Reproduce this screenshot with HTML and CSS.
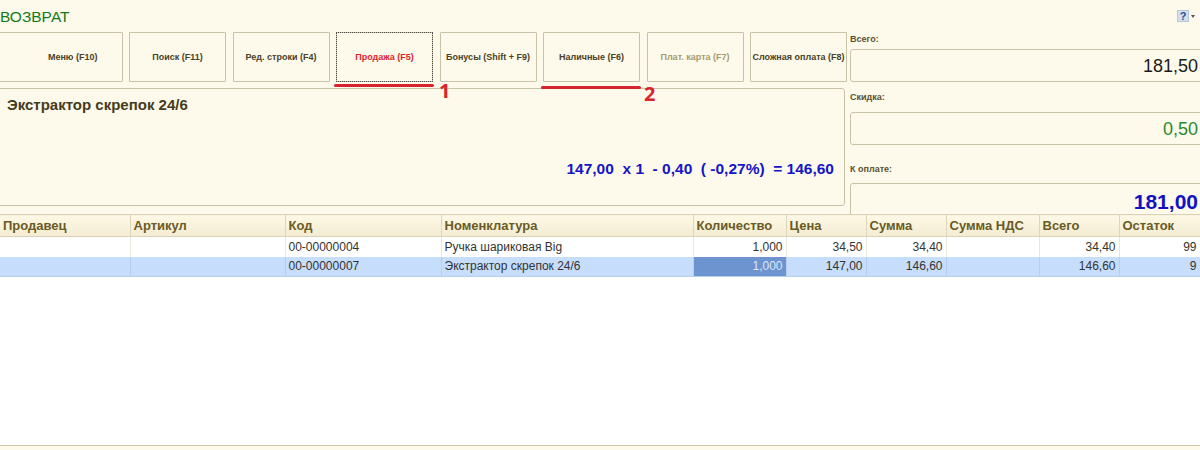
FILE: index.html
```html
<!DOCTYPE html>
<html lang="ru">
<head>
<meta charset="utf-8">
<title>ВОЗВРАТ</title>
<link rel="stylesheet" href="styles.css">
</head>
<body>
<div class="page">
  <header class="titlebar">
    <h1 class="title">ВОЗВРАТ</h1>
    <div class="help">
      <span class="help-box">?</span>
      <svg class="help-caret" width="4" height="3" viewBox="0 0 4 3"><path d="M0 0h4L2 3z" fill="#555"/></svg>
    </div>
  </header>
  <div class="top">
    <div class="main">
      <nav class="buttons">
        <button class="btn">Меню (F10)</button>
        <button class="btn">Поиск (F11)</button>
        <button class="btn">Ред. строки (F4)</button>
        <button class="btn btn-active">Продажа (F5)</button>
        <button class="btn">Бонусы (Shift + F9)</button>
        <button class="btn">Наличные (F6)</button>
        <button class="btn btn-disabled">Плат. карта (F7)</button>
        <button class="btn">Сложная оплата (F8)</button>
      </nav>
      <section class="info">
        <div class="info-name">Экстрактор скрепок 24/6</div>
        <div class="info-calc">147,00&nbsp; x 1&nbsp; - 0,40&nbsp; ( -0,27%)&nbsp; = 146,60</div>
      </section>
    </div>
    <aside class="totals">
      <div class="total total-sum">
        <div class="total-label">Всего:</div>
        <div class="total-field val-black">181,50</div>
      </div>
      <div class="total total-disc">
        <div class="total-label">Скидка:</div>
        <div class="total-field val-green">0,50</div>
      </div>
      <div class="total total-pay">
        <div class="total-label">К оплате:</div>
        <div class="total-field val-blue">181,00</div>
      </div>
    </aside>
  </div>
  <table class="grid">
    <thead>
      <tr>
        <th class="c1">Продавец</th><th class="c2">Артикул</th><th class="c3">Код</th><th class="c4">Номенклатура</th><th class="c5">Количество</th><th class="c6">Цена</th><th class="c7">Сумма</th><th class="c8">Сумма НДС</th><th class="c9">Всего</th><th class="c10">Остаток</th>
      </tr>
    </thead>
    <tbody>
      <tr>
        <td></td><td></td><td>00-00000004</td><td>Ручка шариковая Big</td><td class="num">1,000</td><td class="num">34,50</td><td class="num">34,40</td><td></td><td class="num">34,40</td><td class="num">99</td>
      </tr>
      <tr class="row-selected">
        <td></td><td></td><td>00-00000007</td><td>Экстрактор скрепок 24/6</td><td class="num cell-current">1,000</td><td class="num">147,00</td><td class="num">146,60</td><td></td><td class="num">146,60</td><td class="num">9</td>
      </tr>
    </tbody>
  </table>
  <div class="grid-space"></div>
  <footer class="statusbar"></footer>

  <div class="mark mark-1"></div>
  <div class="mark-num mark-num-1">1</div>
  <div class="mark mark-2"></div>
  <div class="mark-num mark-num-2">2</div>
</div>
</body>
</html>
```
FILE: styles.css
```css
* { box-sizing: border-box; }
html, body { margin: 0; padding: 0; }
body { background: #fdfaeb; font-family: "Liberation Sans", Arial, sans-serif; }

.page {
  position: relative;
  width: 1200px;
  height: 450px;
  overflow: hidden;
  display: flex;
  flex-direction: column;
  background: #fdfaeb;
}

.titlebar {
  height: 32px;
  flex: none;
  display: flex;
  justify-content: space-between;
  align-items: flex-start;
  padding: 8px 5px 0 0;
}
.title {
  margin: 0;
  font-size: 15.5px;
  line-height: 17px;
  font-weight: 400;
  color: #157a1a;
}
.help { display: flex; align-items: center; gap: 2px; margin-top: 2px; }
.help-box {
  width: 12px;
  height: 12px;
  background: #d5deea;
  border: 1px solid #b9c6d8;
  color: #2a4f9c;
  font-size: 11px;
  line-height: 11px;
  font-weight: 700;
  text-align: center;
}
.help-caret { display: block; }

.top { display: flex; height: 182px; flex: none; }
.main { width: 852px; flex: none; margin-left: -2px; }

.buttons { display: flex; gap: 6.5px; height: 50px; }
.btn {
  flex: none;
  width: 97px;
  height: 50px;
  padding: 0;
  background: #fdfaeb;
  border: 1px solid #c9c2a6;
  border-radius: 1px;
  font-family: "Liberation Sans", Arial, sans-serif;
  font-size: 9px;
  font-weight: 700;
  color: #4a4128;
  white-space: nowrap;
  text-align: center;
}
.btn:first-child { width: 124.5px; padding-left: 25px; }
.btn-active { color: #e0242e; outline: 1px dotted #4a4a40; outline-offset: -1px; }
.btn-disabled { color: #a89a70; }

.info {
  margin-top: 6px;
  width: 847px;
  height: 118px;
  background: #fdfaeb;
  border: 1px solid #c9c2a6;
  border-radius: 3px;
  padding: 7px 10px 0 8px;
  display: flex;
  flex-direction: column;
  justify-content: space-between;
  padding-bottom: 27px;
}
.info-name { font-size: 15px; line-height: 17px; font-weight: 700; color: #463c1c; }
.info-calc { font-size: 15.5px; line-height: 18px; font-weight: 700; color: #1414c8; text-align: right; }

.totals { flex: 1; min-width: 0; display: flex; flex-direction: column; margin-right: -4px; }
.total-label { font-size: 9px; font-weight: 700; color: #5a5032; line-height: 11px; }
.total-field {
  border: 1px solid #c9c2a6;
  border-radius: 3px;
  background: #fdfaeb;
  text-align: right;
  padding-right: 5px;
  font-size: 18px;
}
.total-sum .total-label { padding-top: 2px; margin-bottom: 4px; }
.total-sum .total-field { height: 33px; line-height: 33px; }
.total-disc { margin-top: 10px; }
.total-disc .total-label { margin-bottom: 9px; }
.total-disc .total-field { height: 33px; line-height: 32px; }
.total-pay { margin-top: 19px; }
.total-pay .total-label { margin-bottom: 8px; }
.total-pay .total-field { height: 35px; line-height: 35px; font-size: 21px; font-weight: 700; }
.val-black { color: #1a1a1a; }
.val-green { color: #2a8a2e; }
.val-blue { color: #1212c4; }

.grid {
  border-collapse: collapse;
  table-layout: fixed;
  width: 1200px;
  flex: none;
  background: #fff;
}
.grid th {
  height: 22px;
  padding: 0 3px;
  text-align: left;
  font-size: 13px;
  font-weight: 700;
  color: #6a5a24;
  background: linear-gradient(#fdf8e6, #f4ecd2);
  border-top: 1px solid #d9d2b8;
  border-bottom: 1px solid #d9d2b8;
  border-right: 1px solid #ddd6bf;
  white-space: nowrap;
  overflow: hidden;
}
.grid td {
  height: 20px;
  padding: 0 3px;
  font-size: 12px;
  color: #333;
  border-right: 1px solid #e9e7de;
  white-space: nowrap;
  overflow: hidden;
}
.c1 { width: 130px; }
.c2 { width: 155px; }
.c3 { width: 156px; }
.c4 { width: 252px; }
.c5 { width: 93px; }
.c6 { width: 80px; }
.c7 { width: 80px; }
.c8 { width: 93px; }
.c9 { width: 80px; }
.c10 { width: 81px; }
.grid .num { text-align: right; }
.grid .row-selected td { background: #c6ddfb; border-right-color: #b7cfee; border-bottom: 1px solid #b7cfee; }
.grid .row-selected .cell-current { background: #6d94cf; color: #dbe7f6; }

.grid-space { flex: 1; background: #fff; }
.statusbar { height: 5px; flex: none; border-top: 1px solid #cfc8ae; background: #fdfaeb; }

.mark { position: absolute; height: 3px; border-radius: 2px; background: #d8232e; }
.mark-1 { left: 334px; top: 84px; width: 100px; }
.mark-2 { left: 541px; top: 86px; width: 100px; }
.mark-num {
  position: absolute;
  font-family: "Open Sans", sans-serif;
  font-weight: 700;
  font-size: 20px;
  line-height: 20px;
  color: #d8232e;
}
.mark-num-1 { left: 439px; top: 81px; }
.mark-num-2 { left: 644px; top: 84px; }
```
